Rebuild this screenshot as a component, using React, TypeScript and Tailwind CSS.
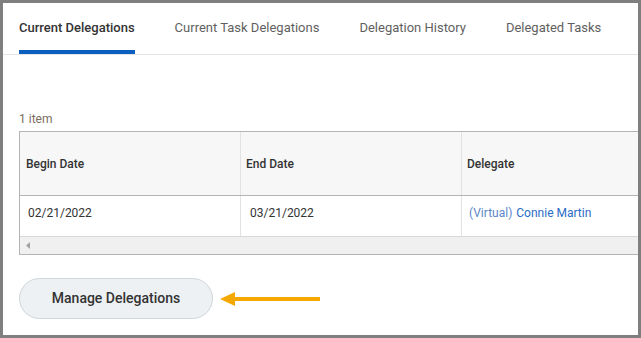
export default function App() {
  const tabs = ['Current Delegations', 'Current Task Delegations', 'Delegation History', 'Delegated Tasks']

  return (
    <div className="w-[641px] h-[338px] overflow-hidden border-[3px] border-[#7f7f7f] bg-white font-['Roboto',sans-serif]">
      {/* Tabs */}
      <div className="flex gap-[40px] pl-[16px] border-b border-[#e3e3e8]">
        {tabs.map((t, i) => (
          <div
            key={t}
            className={`h-[51px] pt-[16px] text-[13px] leading-[17px] border-b-4 ${i === 0 ? 'border-[#0b5fbf] text-[#333333] font-medium' : 'border-transparent text-[#5f5f5f]'}`}
          >
            {t}
          </div>
        ))}
      </div>

      <div className="pl-[16px]">
        <div className="mt-[56px] text-[12px] leading-[16px] text-[#7b6d5e]">1 item</div>

        {/* Table */}
        <div className="mt-[4px] w-[700px] border border-[#b4b4b4] text-[12px]">
          <div className="grid grid-cols-[221px_221px_1fr] h-[64px] bg-[#f7f7f7] border-b border-[#b4b4b4] font-medium text-[#333333]">
            <div className="flex items-center pl-[6px] border-r border-[#e2e2e2]">Begin Date</div>
            <div className="flex items-center pl-[5px] border-r border-[#e2e2e2]">End Date</div>
            <div className="flex items-center pl-[5px]">Delegate</div>
          </div>
          <div className="grid grid-cols-[221px_221px_1fr] h-[41px] border-b border-[#d8d8d8] text-[#333333]">
            <div className="flex items-center pl-[8px] pb-[6px] border-r border-[#e2e2e2]">02/21/2022</div>
            <div className="flex items-center pl-[9px] pb-[6px] border-r border-[#e2e2e2]">03/21/2022</div>
            <div className="flex items-center pl-[7px] pb-[6px] text-[#2a6cc5]">
              <span className="text-[#5b87c8]">(Virtual)</span>
              <span className="ml-[4px]">Connie Martin</span>
            </div>
          </div>
          <div className="h-[17px] bg-[#f0f0f0] flex items-center pl-[6px]">
            <svg width="5" height="7" viewBox="0 0 5 7">
              <path d="M4 0 L0 3.5 L4 7 Z" fill="#a3a3a3" />
            </svg>
          </div>
        </div>

        {/* Button + arrow */}
        <div className="mt-[23px] flex items-center">
          <button className="w-[194px] h-[41px] rounded-full bg-[#eef1f3] border border-[#cfd5d9] text-[14px] font-medium text-[#333333]">
            Manage Delegations
          </button>
          <svg className="ml-[7px]" width="100" height="16" viewBox="0 0 100 16">
            <path d="M0 8 L15 1 L15 15 Z" fill="#f5a800" />
            <rect x="14" y="6" width="86" height="4" fill="#f5a800" />
          </svg>
        </div>
      </div>
    </div>
  )
}
